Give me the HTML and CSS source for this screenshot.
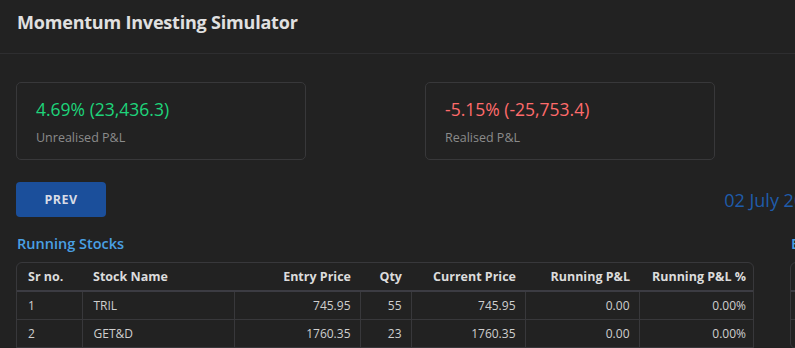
FILE: index.html
```html
<!DOCTYPE html>
<html>
<head>
<meta charset="utf-8">
<title>Momentum Investing Simulator</title>
<link rel="stylesheet" href="styles.css">
</head>
<body>
<div class="page">
  <header class="topbar">
    <h1 class="title">Momentum Investing Simulator</h1>
  </header>
  <main class="main">
    <section class="cards">
      <div class="card">
        <div class="card-value pos">4.69% (23,436.3)</div>
        <div class="card-label">Unrealised P&amp;L</div>
      </div>
      <div class="card">
        <div class="card-value neg">-5.15% (-25,753.4)</div>
        <div class="card-label">Realised P&amp;L</div>
      </div>
      <div class="card">
        <div class="card-value pos">0.00% (0.0)</div>
        <div class="card-label">Total P&amp;L</div>
      </div>
      <div class="card">
        <div class="card-value">5,00,000</div>
        <div class="card-label">Capital</div>
      </div>
    </section>
    <section class="controls">
      <div class="ctl-left"><button class="btn">PREV</button></div>
      <div class="date">02 July 2024</div>
      <div class="ctl-right"><button class="btn">NEXT</button></div>
    </section>
    <section class="panels">
      <div class="panel">
        <h2 class="panel-title">Running Stocks</h2>
        <div class="table-wrap">
          <table class="tbl">
            <thead>
              <tr>
                <th class="c-sr">Sr no.</th>
                <th class="c-name">Stock Name</th>
                <th class="c-entry num">Entry Price</th>
                <th class="c-qty num">Qty</th>
                <th class="c-cur num">Current Price</th>
                <th class="c-pl num">Running P&amp;L</th>
                <th class="c-plp num">Running P&amp;L %</th>
              </tr>
            </thead>
            <tbody>
              <tr><td>1</td><td>TRIL</td><td class="num">745.95</td><td class="num">55</td><td class="num">745.95</td><td class="num">0.00</td><td class="num">0.00%</td></tr>
              <tr><td>2</td><td>GET&amp;D</td><td class="num">1760.35</td><td class="num">23</td><td class="num">1760.35</td><td class="num">0.00</td><td class="num">0.00%</td></tr>
              <tr><td>3</td><td>KPIL</td><td class="num">1285.10</td><td class="num">31</td><td class="num">1285.10</td><td class="num">0.00</td><td class="num">0.00%</td></tr>
            </tbody>
          </table>
        </div>
      </div>
      <div class="panel">
        <h2 class="panel-title">Booked Stocks</h2>
        <div class="table-wrap">
          <table class="tbl">
            <thead>
              <tr>
                <th class="c-sr">Sr no.</th>
                <th class="c-name">Stock Name</th>
                <th class="c-entry num">Entry Price</th>
                <th class="c-qty num">Qty</th>
                <th class="c-cur num">Exit Price</th>
                <th class="c-pl num">Booked P&amp;L</th>
                <th class="c-plp num">Booked P&amp;L %</th>
              </tr>
            </thead>
            <tbody>
              <tr><td>1</td><td>ABC</td><td class="num">100.00</td><td class="num">10</td><td class="num">95.00</td><td class="num">-50.00</td><td class="num">-5.00%</td></tr>
              <tr><td>2</td><td>XYZ</td><td class="num">200.00</td><td class="num">5</td><td class="num">190.00</td><td class="num">-50.00</td><td class="num">-5.00%</td></tr>
            </tbody>
          </table>
        </div>
      </div>
    </section>
  </main>
</div>
</body>
</html>
```
FILE: styles.css
```css
html, body {
  margin: 0;
  padding: 0;
  background: #222222;
  overflow: hidden;
}
body {
  width: 795px;
  height: 348px;
  font-family: "Open Sans", "Noto Sans", sans-serif;
  color: #d6d6d6;
}
.page {
  width: 1549px;
}
.topbar {
  height: 54px;
  box-sizing: border-box;
  border-bottom: 1px solid #2e2e30;
  display: flex;
  align-items: flex-start;
  padding: 9px 17px 0;
}
.title {
  margin: 0;
  font-size: 18px;
  line-height: 26px;
  font-weight: 700;
  color: #e0e0e0;
  letter-spacing: -0.2px;
}
.main {
  padding: 28px 16px 16px;
}
.cards {
  display: flex;
  gap: 119px;
}
.card {
  width: 290px;
  height: 78px;
  box-sizing: border-box;
  border: 1px solid #38383a;
  border-radius: 5px;
  padding: 15px 19px 0;
}
.card-value {
  font-size: 17.5px;
  font-weight: 500;
  line-height: 22px;
  color: #ddd;
}
.card-value.pos { color: #1ed47a; }
.card-value.neg { color: #ff6b6b; }
.card-label {
  margin-top: 9px;
  font-size: 12.5px;
  color: #8b8b8b;
}
.controls {
  margin-top: 22px;
  display: grid;
  grid-template-columns: 1fr auto 1fr;
  align-items: center;
}
.ctl-right { display: flex; justify-content: flex-end; }
.btn {
  width: 90px;
  height: 35px;
  border: none;
  border-radius: 4px;
  background: #1b4f9b;
  color: #d8dce6;
  font-family: inherit;
  font-size: 12.5px;
  font-weight: 700;
  letter-spacing: 0.5px;
}
.date {
  font-size: 18px;
  color: #1f5cab;
}
.panels {
  margin-top: 17px;
  display: flex;
  gap: 36px;
}
.panel {
  width: 738px;
}
.panel-title {
  margin: 0 0 8px 1px;
  font-size: 14.5px;
  font-weight: 600;
  color: #4aa0e4;
  line-height: 20px;
}
.table-wrap {
  border: 1px solid #38383b;
  border-radius: 6px;
  overflow: hidden;
}
.tbl {
  width: 100%;
  border-collapse: collapse;
  table-layout: fixed;
  font-size: 12px;
}
.tbl th, .tbl td {
  box-sizing: border-box;
}
.tbl th {
  height: 28px;
  font-size: 12.5px;
  font-weight: 700;
  color: #dcdcdc;
  text-align: left;
  padding: 0 9px 0 11px;
  white-space: nowrap;
  border-bottom: 2px solid #3c3c43;
}
.tbl td {
  height: 28px;
  padding: 0 9px 0 11px;
  color: #cfcfcf;
  border: 1px solid #38383b;
}
.tbl td:first-child { border-left: none; }
.tbl td:last-child { border-right: none; }
.tbl .num { text-align: right; }
.c-sr { width: 65px; }
.c-name { width: 152px; }
.c-entry { width: 126px; }
.c-qty { width: 51px; }
.c-cur { width: 114px; }
.c-pl { width: 114px; }
.c-plp { width: 116px; }
```
